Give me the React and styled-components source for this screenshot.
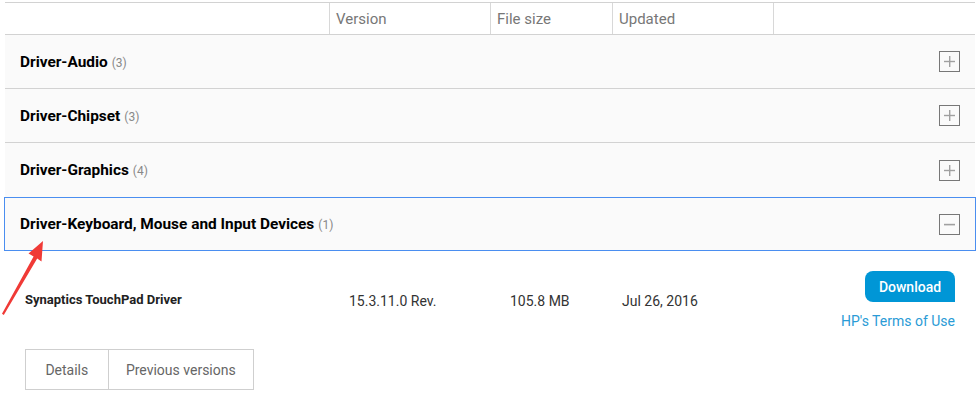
import React from "react";
import styled, { createGlobalStyle } from "styled-components";

const Global = createGlobalStyle`
  html, body { margin: 0; padding: 0; background: #fff; }
  body { font-family: Roboto, "Liberation Sans", Arial, sans-serif; }
  * { box-sizing: border-box; }
`;

const Page = styled.div`
  position: relative;
  width: 980px;
  height: 394px;
  padding: 2px 5px 0 5px;
  overflow: hidden;
`;

const HeaderRow = styled.div`
  display: grid;
  grid-template-columns: 324px 161px 122px 161px 1fr;
  height: 33px;
  border-top: 1px solid #d2d2d2;
  border-bottom: 1px solid #d2d2d2;
`;

const HeaderCell = styled.div`
  display: flex;
  align-items: center;
  padding-left: 6px;
  font-size: 15px;
  color: #777;
  border-left: ${(p) => (p.$first ? "none" : "1px solid #d8d8d8")};
`;

const Category = styled.div`
  display: flex;
  align-items: center;
  justify-content: space-between;
  height: 54px;
  background: #fafafa;
  padding: 0 15px;
  margin: ${(p) => (p.$active ? "0 -1px" : "0")};
  border: ${(p) => (p.$active ? "1px solid #4a8ef0" : "none")};
  border-bottom: ${(p) =>
    p.$active ? "1px solid #4a8ef0" : p.$beforeActive ? "none" : "1px solid #d2d2d2"};
`;

const Title = styled.div`
  font-size: 15.4px;
  font-weight: 700;
  color: #000;
`;

const Count = styled.span`
  font-size: 12px;
  font-weight: 400;
  color: #888;
  margin-left: 4px;
`;

const Toggle = styled.div`
  width: 21px;
  height: 21px;
  border: 1px solid #777;
  display: flex;
  align-items: center;
  justify-content: center;
`;

const ProductRow = styled.div`
  display: grid;
  grid-template-columns: 324px 161px 112px 1fr auto;
  padding: 20px 20px 0 20px;
  align-items: start;
`;

const Name = styled.div`
  margin-top: 20px;
  font-size: 13px;
  font-weight: 700;
  color: #222;
  line-height: 18px;
`;

const Cell = styled.div`
  margin-top: 21px;
  font-size: 14px;
  color: #333;
  line-height: 18px;
`;

const Action = styled.div`
  display: flex;
  flex-direction: column;
  align-items: flex-end;
`;

const DownloadButton = styled.div`
  width: 90px;
  height: 31px;
  background: #0096d6;
  color: #fff;
  border-radius: 8px 8px 0 8px;
  display: flex;
  align-items: center;
  justify-content: center;
  font-size: 14px;
  font-weight: 500;
`;

const TermsLink = styled.a`
  margin-top: 10px;
  font-size: 14px;
  line-height: 18px;
  color: #2a9bd6;
  text-decoration: none;
`;

const Tabs = styled.div`
  display: flex;
  margin: 19px 0 0 20px;
  width: 229px;
  height: 41px;
  border: 1px solid #cfcfcf;
`;

const Tab = styled.div`
  width: ${(p) => p.$w}px;
  display: flex;
  align-items: center;
  justify-content: center;
  font-size: 14px;
  color: #666;
  border-left: ${(p) => (p.$first ? "none" : "1px solid #cfcfcf")};
`;

const Arrow = styled.svg`
  position: absolute;
  left: 0;
  top: 0;
  pointer-events: none;
`;

const PlusIcon = () => (
  <svg width="11" height="11" viewBox="0 0 11 11">
    <rect x="5" y="0" width="1.4" height="11" fill="#a0a0a0" />
    <rect x="0" y="4.8" width="11" height="1.4" fill="#a0a0a0" />
  </svg>
);

const MinusIcon = () => (
  <svg width="11" height="11" viewBox="0 0 11 11">
    <rect x="0" y="4.8" width="11" height="1.6" fill="#a0a0a0" />
  </svg>
);

const categories = [
  { name: "Driver-Audio", count: 3 },
  { name: "Driver-Chipset", count: 3 },
  { name: "Driver-Graphics", count: 4, beforeActive: true },
  { name: "Driver-Keyboard, Mouse and Input Devices", count: 1, active: true },
];

export default function App() {
  return (
    <>
      <Global />
      <Page>
        <HeaderRow>
          <HeaderCell $first />
          <HeaderCell>Version</HeaderCell>
          <HeaderCell>File size</HeaderCell>
          <HeaderCell>Updated</HeaderCell>
          <HeaderCell />
        </HeaderRow>
        {categories.map((c) => (
          <Category key={c.name} $active={c.active} $beforeActive={c.beforeActive}>
            <Title>
              {c.name}
              <Count>({c.count})</Count>
            </Title>
            <Toggle>{c.active ? <MinusIcon /> : <PlusIcon />}</Toggle>
          </Category>
        ))}
        <ProductRow>
          <Name>Synaptics TouchPad Driver</Name>
          <Cell>15.3.11.0 Rev.</Cell>
          <Cell>105.8 MB</Cell>
          <Cell>Jul 26, 2016</Cell>
          <Action>
            <DownloadButton>Download</DownloadButton>
            <TermsLink href="#">HP's Terms of Use</TermsLink>
          </Action>
        </ProductRow>
        <Tabs>
          <Tab $first $w={82}>Details</Tab>
          <Tab $w={146}>Previous versions</Tab>
        </Tabs>
        <Arrow width="60" height="320" viewBox="0 0 60 320">
          <polygon
            points="43,241 41.5,261.5 37.2,258.6 3.8,315 2,313.8 33.6,256.4 28.5,253.5"
            fill="#f03a36"
          />
        </Arrow>
      </Page>
    </>
  );
}
